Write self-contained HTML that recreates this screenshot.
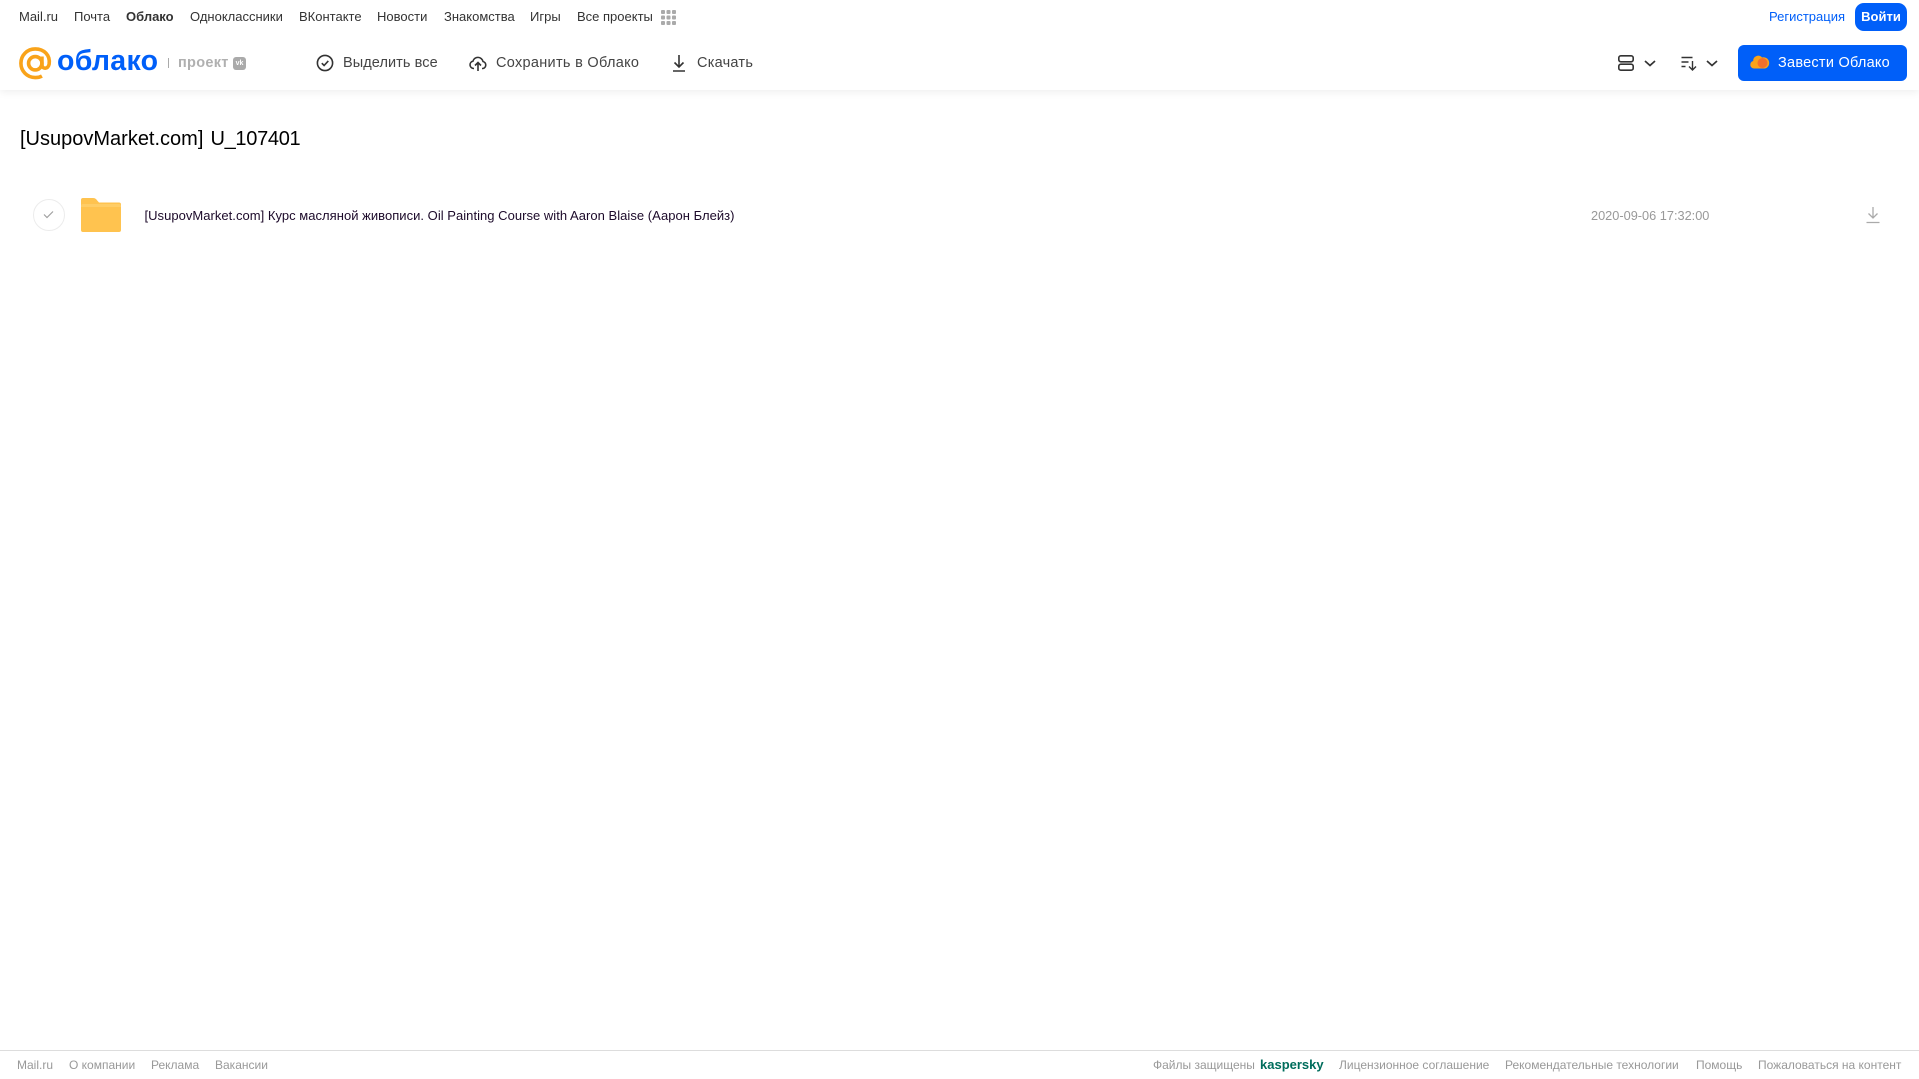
<!DOCTYPE html>
<html lang="ru"><head><meta charset="utf-8"><title>Облако</title>
<style>
html,body{margin:0;padding:0;background:#fff}
body{width:1919px;height:1079px;position:relative;overflow:hidden;font-family:"Liberation Sans",Arial,sans-serif}
.t{position:absolute;white-space:nowrap;line-height:20px;height:20px}
.n{font-size:13px;top:7px;color:#333}
.a{font-size:14.5px;top:53px;color:#444;letter-spacing:.25px}
.f{font-size:12px;top:1055px;color:#999}
svg{position:absolute;overflow:visible}
</style></head><body>
<div style="position:absolute;left:0;top:0;width:1919px;height:90px;background:#fff;box-shadow:0 2px 8px rgba(0,0,0,.07)"></div>

<span class="t n" style="left:19px">Mail.ru</span>
<span class="t n" style="left:74px">Почта</span>
<span class="t n" style="left:126px;font-weight:bold">Облако</span>
<span class="t n" style="left:190px">Одноклассники</span>
<span class="t n" style="left:299px">ВКонтакте</span>
<span class="t n" style="left:377px">Новости</span>
<span class="t n" style="left:444px">Знакомства</span>
<span class="t n" style="left:530px">Игры</span>
<span class="t n" style="left:577px">Все проекты</span>
<svg style="left:661px;top:10px" width="15" height="15" fill="#aaa"><rect width="4" height="4" rx="1"/><rect x="5.500" width="4" height="4" rx="1"/><rect x="11" width="4" height="4" rx="1"/><rect y="5.500" width="4" height="4" rx="1"/><rect x="5.500" y="5.500" width="4" height="4" rx="1"/><rect x="11" y="5.500" width="4" height="4" rx="1"/><rect y="11" width="4" height="4" rx="1"/><rect x="5.500" y="11" width="4" height="4" rx="1"/><rect x="11" y="11" width="4" height="4" rx="1"/></svg>

<span class="t n" style="left:1769px;color:#005ff9">Регистрация</span>
<div style="position:absolute;left:1855px;top:3px;width:52px;height:28px;background:#005ff9;border-radius:9px;color:#fff;font-size:13px;font-weight:bold;text-align:center;line-height:28px">Войти</div>

<svg style="left:19px;top:47px" width="32.500" height="32.500" viewBox="0 0 34 34" fill="none" stroke="#f9a31a" stroke-width="3.800"><circle cx="17" cy="17" r="7"/><path d="M24 10v8.500c0 5 6.500 5 7.500-.5C33 8.500 26 2 17 2 8.500 2 2 8.700 2 17s6.500 15 15 15c2.700 0 5-.5 7-1.600"/></svg>
<span class="t" style="left:57px;top:46px;height:30px;line-height:30px;font-size:28.500px;font-weight:bold;color:#005ff9;letter-spacing:.3px">облако</span>
<div style="position:absolute;left:168px;top:58px;width:1px;height:10px;background:#aaa"></div>
<span class="t" style="left:178px;top:53px;font-size:14.500px;font-weight:bold;color:#b0b0b0;letter-spacing:.3px">проект</span>
<div style="position:absolute;left:233px;top:57px;width:13px;height:13px;background:#aaa;border-radius:3px;color:#fff;font-size:7px;font-weight:bold;line-height:13px;text-align:center">vk</div>

<svg style="left:316px;top:54px" width="18" height="18" viewBox="0 0 18 18" fill="none" stroke="#333" stroke-width="1.600"><circle cx="9" cy="9" r="7.600"/><path d="M5.800 9.200l2.300 2.300 4.200-4.600"/></svg>
<span class="t a" style="left:343px;letter-spacing:.08px">Выделить все</span>
<svg style="left:469px;top:54px" width="18" height="18" viewBox="0 0 18 18" fill="none" stroke="#333" stroke-width="1.600"><path d="M5 14.500H4.500a3.700 3.700 0 0 1-.6-7.300A5.200 5.200 0 0 1 14 7.500a3.600 3.600 0 0 1 0 7H13M9 17V9M6 11.500L9 8.500l3 3"/></svg>
<span class="t a" style="left:496px;letter-spacing:.3px">Сохранить в Облако</span>
<svg style="left:671px;top:54px" width="16" height="18" viewBox="0 0 16 18" fill="none" stroke="#333" stroke-width="1.600"><path d="M8 1v11.500M3.500 8.500L8 13l4.500-4.500M2 17h12"/></svg>
<span class="t a" style="left:697px">Скачать</span>

<svg style="left:1618px;top:55px" width="16" height="16" fill="none" stroke="#333" stroke-width="1.600"><rect x=".8" y=".8" width="14.400" height="6" rx="2"/><rect x=".8" y="9.200" width="14.400" height="6" rx="2"/></svg>
<svg style="left:1644px;top:60px" width="12" height="7" fill="none" stroke="#333" stroke-width="1.700"><path d="M1 1l5 4.500L11 1"/></svg>
<svg style="left:1681px;top:56px" width="17" height="15" fill="none" stroke="#333" stroke-width="1.400"><path d="M.5 1.500h11M.5 6h7M.5 10.500h4M11.500 5v9M8 10.500l3.500 3.500 3.500-3.500"/></svg>
<svg style="left:1706px;top:60px" width="12" height="7" fill="none" stroke="#333" stroke-width="1.700"><path d="M1 1l5 4.500L11 1"/></svg>

<div style="position:absolute;left:1738px;top:45px;width:169px;height:36px;background:#005ff9;border-radius:6px"></div>
<svg style="left:1750px;top:53px" width="19" height="16"><path d="M4 15.500a3.800 3.800 0 0 1-.8-7.500A5 5 0 0 1 12 4.500a4 4 0 0 1 3 11z" fill="#f9a31a"/><circle cx="12.500" cy="10" r="5" fill="#f3702b"/></svg>
<span class="t" style="left:1778px;top:53px;font-size:14.500px;color:#fff;letter-spacing:.25px">Завести Облако</span>

<span class="t" style="left:20px;top:127px;height:24px;line-height:24px;font-size:20px;color:#000;word-spacing:1.500px">[UsupovMarket.com] <span style="letter-spacing:-.3px">U_107401</span></span>

<div style="position:absolute;left:33px;top:199px;width:30px;height:30px;border:1px solid #ececec;border-radius:50%"></div>
<svg style="left:43px;top:210px" width="11" height="9" fill="none" stroke="#a0a0a0" stroke-width="1.200"><path d="M1 4.500l3 3 6-6"/></svg>
<svg style="left:81px;top:198px" width="40" height="34" viewBox="0 0 40 34"><path d="M2 0h10c2 0 3 .8 4 2.200L18 4.500h20a2 2 0 0 1 2 2V32a2 2 0 0 1-2 2H2a2 2 0 0 1-2-2V2a2 2 0 0 1 2-2z" fill="#ffc34f"/><path d="M0 8a2 2 0 0 1 2-2h36a2 2 0 0 1 2 2v1H0z" fill="#ffcd66"/></svg>
<span class="t" style="left:144.500px;top:206px;font-size:13px;color:#1c0a2a;letter-spacing:.03px">[UsupovMarket.com] Курс масляной живописи. Oil Painting Course with Aaron Blaise (Аарон Блейз)</span>
<span class="t" style="left:1591px;top:206px;font-size:12.750px;color:#999">2020-09-06 17:32:00</span>
<svg style="left:1866px;top:206px" width="14" height="18" fill="none" stroke="#aaa" stroke-width="1.300"><path d="M7 1v11M2.500 7.500L7 12l4.500-4.500M.5 16.500h13"/></svg>

<div style="position:absolute;left:0;top:1050px;width:1919px;height:1px;background:#ddd"></div>
<span class="t f" style="left:17px">Mail.ru</span>
<span class="t f" style="left:69px">О компании</span>
<span class="t f" style="left:151px">Реклама</span>
<span class="t f" style="left:215px">Вакансии</span>
<span class="t f" style="left:1153px">Файлы защищены</span>
<span class="t" style="left:1260px;top:1055px;font-size:13px;font-weight:bold;color:#006d5c">kaspersky</span>
<span class="t f" style="left:1339px">Лицензионное соглашение</span>
<span class="t f" style="left:1505px">Рекомендательные технологии</span>
<span class="t f" style="left:1696px">Помощь</span>
<span class="t f" style="left:1758px">Пожаловаться на контент</span>
</body></html>
